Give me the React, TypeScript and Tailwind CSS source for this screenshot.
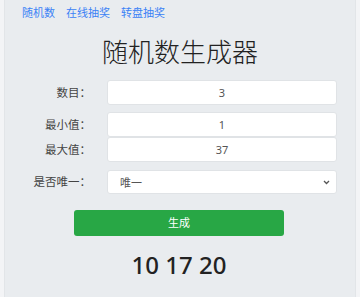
const fields = [
  { label: "数目：", value: "3", top: "mt-0" },
  { label: "最小值：", value: "1", top: "mt-[7px]" },
  { label: "最大值：", value: "37", top: "mt-0" },
];

export default function App() {
  return (
    <div
      className="h-[297px] w-[360px] bg-[#f3f4f6] px-[4px] overflow-hidden"
      style={{ fontFamily: '"Noto Sans", "Noto Sans CJK SC", sans-serif' }}
    >
      <div className="h-full bg-[#e9ecef] border-x border-[#e2e5e8]">
        <nav className="flex gap-[11px] pl-[17px] pt-[5px] text-[11px] text-[#3b82f6] leading-[16px]">
          <a>随机数</a>
          <a>在线抽奖</a>
          <a>转盘抽奖</a>
        </nav>

        <h1 className="mt-[14px] text-center text-[26px] font-light leading-[34px] text-[#222]">
          随机数生成器
        </h1>

        <div className="mt-[11px]">
          {fields.map((f) => (
            <div key={f.label} className={`flex items-center ${f.top}`}>
              <label className="w-[86px] text-right text-[11.5px] text-[#444]">{f.label}</label>
              <input
                readOnly
                value={f.value}
                className="ml-[16px] h-[25px] w-[230px] rounded-[3px] border border-[#e0e3e6] bg-white text-center text-[11px] text-[#555] outline-none"
              />
            </div>
          ))}

          <div className="mt-[8px] flex items-center">
            <label className="w-[86px] text-right text-[11.5px] text-[#444]">是否唯一：</label>
            <div className="relative ml-[16px] h-[24px] w-[230px] rounded-[3px] border border-[#e0e3e6] bg-white">
              <span className="absolute left-[12px] top-[4px] text-[11px] text-[#555]">唯一</span>
              <svg
                className="absolute right-[6px] top-[9px]"
                width="7"
                height="5"
                viewBox="0 0 7 5"
                fill="none"
                stroke="#555"
                strokeWidth="1.3"
              >
                <path d="M1 1l2.5 2.5L6 1" />
              </svg>
            </div>
          </div>
        </div>

        <div className="mt-[16px] flex justify-center pr-[2px]">
          <button className="h-[26px] w-[210px] rounded-[3px] bg-[#28a745] text-[11px] text-white">
            生成
          </button>
        </div>

        <div className="mt-[13px] pr-[2px] text-center text-[24px] font-medium leading-[32px] text-[#222]">
          10 17 20
        </div>
      </div>
    </div>
  );
}
